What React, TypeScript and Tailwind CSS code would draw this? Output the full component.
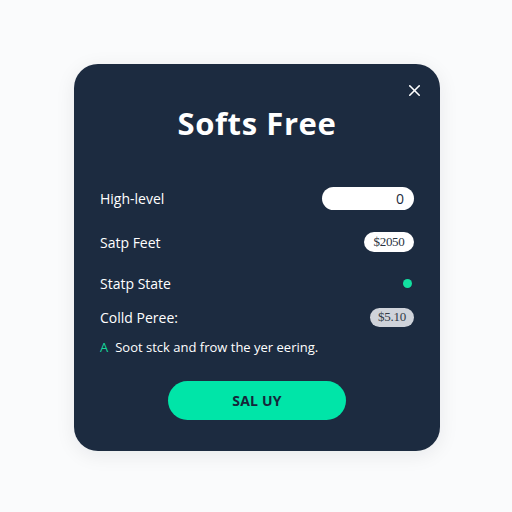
import React from 'react';
import { X } from 'lucide-react';

const font = { fontFamily: '"Open Sans", "Noto Sans", sans-serif' };

export default function App() {
  return (
    <div
      className="w-[512px] h-[512px] bg-[#fafbfc] flex items-start justify-center pt-[64px] pl-[2px]"
      style={font}
    >
      <div className="relative w-[366px] h-[387px] rounded-[24px] bg-[#1c2b40] shadow-[0_4px_20px_rgba(15,23,42,0.08)] pt-[41px] px-[26px] flex flex-col">
        <button className="absolute top-[17px] right-[16px] text-white">
          <X className="w-[19px] h-[19px]" strokeWidth={2} />
        </button>

        <h1 className="text-center text-white text-[31px] leading-[36px] font-bold tracking-[0.6px]">
          Softs Free
        </h1>

        <div className="mt-[45px] h-6 flex items-center justify-between">
          <span className="text-white text-[14px]">High-level</span>
          <div className="w-[92px] h-[23px] rounded-full bg-white flex items-center justify-end pr-[10px] text-[14px] text-[#1c2b40] font-medium">
            0
          </div>
        </div>

        <div className="mt-[20px] h-6 flex items-center justify-between">
          <span className="text-white text-[14px]">Satp Feet</span>
          <div
            className="w-[50px] h-[20px] rounded-full bg-white flex items-center justify-center text-[13px] text-[#2a3442] tracking-[-0.3px]"
            style={{ fontFamily: '"Liberation Serif", serif' }}
          >
            $2050
          </div>
        </div>

        <div className="mt-[17px] h-6 flex items-center justify-between">
          <span className="text-white text-[14px]">Statp State</span>
          <span className="w-[9px] h-[9px] rounded-full bg-[#12e0a0] mr-[2px]" />
        </div>

        <div className="mt-[10px] h-6 flex items-center justify-between">
          <span className="text-white text-[14px]">Colld Peree:</span>
          <div
            className="w-[44px] h-[19px] rounded-full bg-[#cfd3da] flex items-center justify-center text-[13px] text-[#333b47] tracking-[-0.3px]"
            style={{ fontFamily: '"Liberation Serif", serif' }}
          >
            $5.10
          </div>
        </div>

        <p className="mt-[9px] h-5 flex items-center text-[13px] text-white">
          <span className="text-[#14d99c] mr-[7px]">A</span>
          Soot stck and frow the yer eering.
        </p>

        <div className="mt-[23px] flex justify-center">
          <button className="w-[178px] h-[39px] rounded-full bg-[#00e5a8] text-[#16263a] text-[14px] font-bold tracking-[0.2px]">
            SAL UY
          </button>
        </div>
      </div>
    </div>
  );
}
